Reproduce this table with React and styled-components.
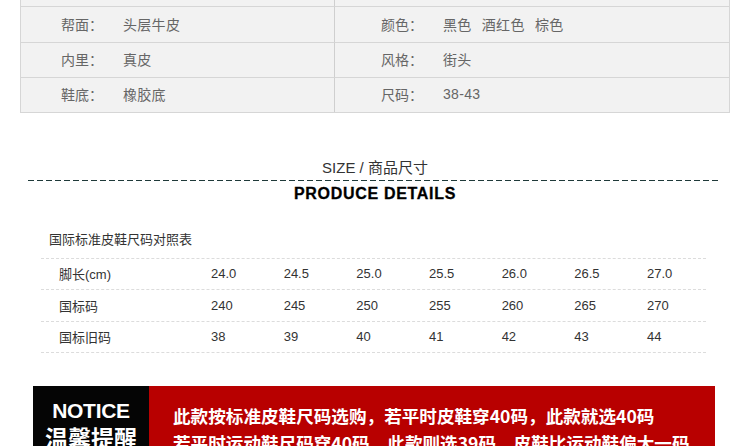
import React from 'react';
import styled, { createGlobalStyle } from 'styled-components';

const GlobalStyle = createGlobalStyle`
    body {
        margin: 0;
        background: #fff;
        font-family: "Liberation Sans", "Noto Sans CJK SC", sans-serif;
    }
`;

const Page = styled.div`
    width: 750px;
    height: 446px;
    overflow: hidden;
`;

const SpecTable = styled.div`
    margin: 0 20px;
    display: grid;
    grid-template-columns: 314px 1fr;
    background: #f2f2f2;
    border-left: 1px solid #d6d6d6;
    border-right: 1px solid #d6d6d6;
    border-bottom: 1px solid #d6d6d6;
`;

const SpecCell = styled.div`
    height: ${props => (props.$cut ? '7px' : '35px')};
    box-sizing: border-box;
    border-bottom: ${props => (props.$cut ? '1px solid #d6d6d6' : 'none')};
    border-top: ${props => (props.$first ? 'none' : '1px solid #d6d6d6')};
    border-right: ${props => (props.$left ? '1px solid #cfcfcf' : 'none')};
    display: flex;
    align-items: center;
    padding-left: ${props => (props.$left ? '40px' : '46px')};
    padding-bottom: ${props => (props.$cut ? '0' : '2px')};
    font-size: 14px;
    color: #666;
`;

const SpecLabel = styled.span`
    width: 62px;
`;

const SpecValue = styled.span`
    word-spacing: 6px;
    letter-spacing: 0.3px;
`;

const TitleBlock = styled.div`
    margin-top: 46px;
    display: flex;
    flex-direction: column;
    align-items: center;
`;

const SizeTitle = styled.div`
    font-size: 15px;
    color: #333;
    line-height: 17px;
`;

const Dashed = styled.div`
    align-self: stretch;
    margin: 4px 30px 0 28px;
    height: 1px;
    background: repeating-linear-gradient(90deg, #1f3a3a 0 6px, transparent 6px 9px);
`;

const ProduceTitle = styled.div`
    margin-top: 4px;
    font-size: 16px;
    font-weight: 900;
    letter-spacing: 0.7px;
    color: #000;
    line-height: 18px;
    -webkit-text-stroke: 0.3px #000;
`;

const Caption = styled.div`
    margin: 29px 0 0 49px;
    font-size: 13px;
    color: #333;
    line-height: 16px;
`;

const SizeTable = styled.div`
    margin: 10px 0 0 41px;
    width: 665px;
    border-top: 1px dashed #dcdcdc;
`;

const SizeRow = styled.div`
    display: grid;
    grid-template-columns: 170px repeat(6, 72.67px) 1fr;
    align-items: center;
    box-sizing: border-box;
    height: 31.4px;
    padding-bottom: 1px;
    border-bottom: 1px dashed #dcdcdc;
    font-size: 13px;
    color: #333;
`;

const SizeHead = styled.span`
    padding-left: 18px;
`;

const Notice = styled.div`
    margin: 33px 35px 0 33px;
    display: flex;
    height: 80px;
`;

const NoticeBadge = styled.div`
    width: 116px;
    background: #050505;
    color: #fff;
    display: flex;
    flex-direction: column;
    align-items: center;
    padding-top: 14px;
`;

const NoticeEn = styled.div`
    font-size: 21px;
    font-weight: bold;
    line-height: 22px;
    letter-spacing: -0.3px;
`;

const NoticeZh = styled.div`
    font-family: "Noto Sans CJK SC", sans-serif;
    font-size: 23px;
    font-weight: bold;
    line-height: 28px;
    margin-top: 1px;
`;

const NoticeBody = styled.div`
    flex: 1;
    background: #b80000;
    color: #fff;
    padding: 16px 0 0 24px;
    font-family: "Noto Sans CJK SC", sans-serif;
    font-size: 17.6px;
    font-weight: bold;
    line-height: 27px;
    white-space: nowrap;
`;

const specs = [
    ['帮面：', '头层牛皮', '颜色：', '黑色 酒红色 棕色'],
    ['内里：', '真皮', '风格：', '街头'],
    ['鞋底：', '橡胶底', '尺码：', '38-43'],
];

const sizes = [
    ['脚长(cm)', '24.0', '24.5', '25.0', '25.5', '26.0', '26.5', '27.0'],
    ['国标码', '240', '245', '250', '255', '260', '265', '270'],
    ['国标旧码', '38', '39', '40', '41', '42', '43', '44'],
];

const App = () => {
    return (
        <Page>
            <GlobalStyle />
            <SpecTable>
                <SpecCell $cut $first $left />
                <SpecCell $cut $first />
                {specs.map((row, i) => (
                    <React.Fragment key={i}>
                        <SpecCell $left $first={i === 0}>
                            <SpecLabel>{row[0]}</SpecLabel>
                            <SpecValue>{row[1]}</SpecValue>
                        </SpecCell>
                        <SpecCell $first={i === 0}>
                            <SpecLabel>{row[2]}</SpecLabel>
                            <SpecValue>{row[3]}</SpecValue>
                        </SpecCell>
                    </React.Fragment>
                ))}
            </SpecTable>

            <TitleBlock>
                <SizeTitle>SIZE / 商品尺寸</SizeTitle>
                <Dashed />
                <ProduceTitle>PRODUCE DETAILS</ProduceTitle>
            </TitleBlock>

            <Caption>国际标准皮鞋尺码对照表</Caption>
            <SizeTable>
                {sizes.map((row, i) => (
                    <SizeRow key={i}>
                        <SizeHead>{row[0]}</SizeHead>
                        {row.slice(1).map((v, j) => (
                            <span key={j}>{v}</span>
                        ))}
                    </SizeRow>
                ))}
            </SizeTable>

            <Notice>
                <NoticeBadge>
                    <NoticeEn>NOTICE</NoticeEn>
                    <NoticeZh>温馨提醒</NoticeZh>
                </NoticeBadge>
                <NoticeBody>
                    此款按标准皮鞋尺码选购，若平时皮鞋穿40码，此款就选40码
                    <br />
                    若平时运动鞋尺码穿40码，此款则选39码，皮鞋比运动鞋偏大一码
                </NoticeBody>
            </Notice>
        </Page>
    );
};

export default App;
